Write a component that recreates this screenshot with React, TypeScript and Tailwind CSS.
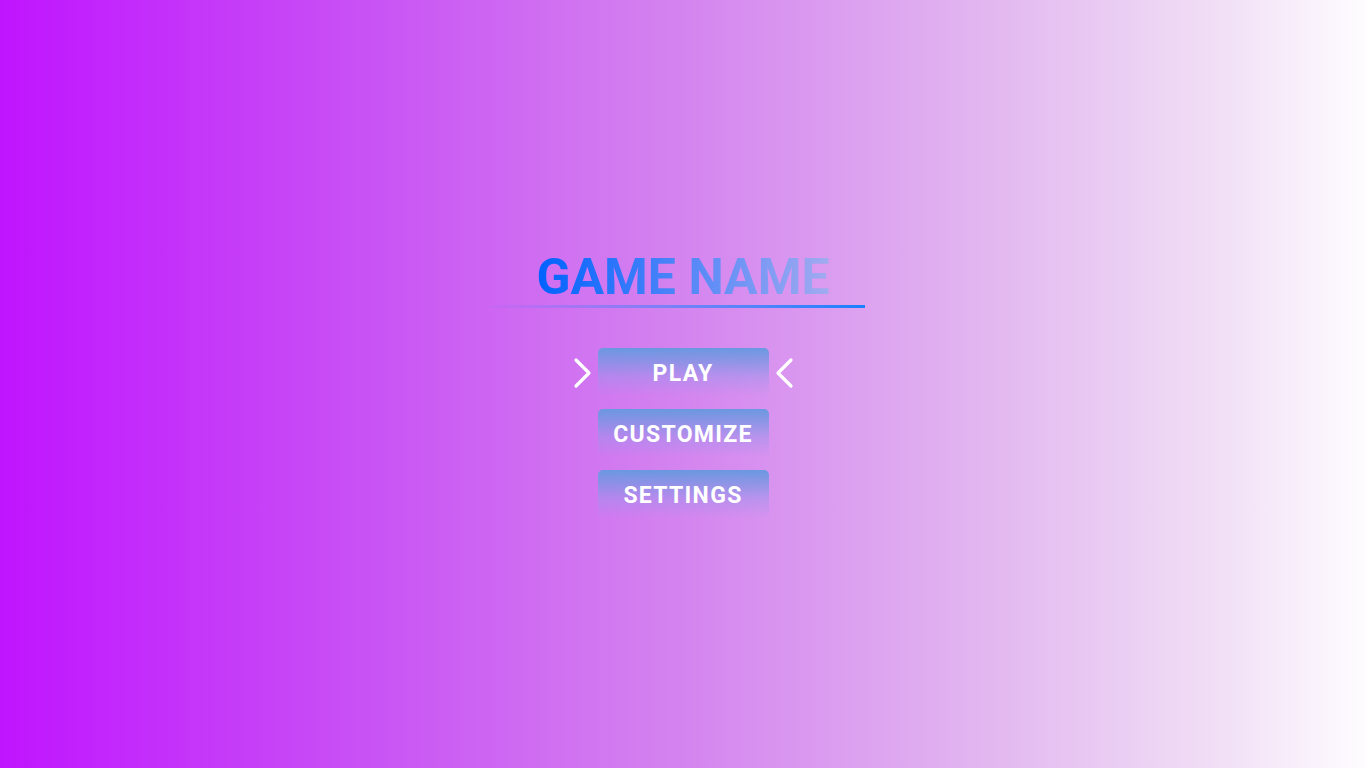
import React from "react";

const Chevron = ({ dir }: { dir: "right" | "left" }) => (
  <svg width="20" height="32" viewBox="0 0 20 32" fill="none">
    {dir === "right" ? (
      <path d="M3 3 L16 16 L3 29" stroke="white" strokeWidth="3.2" strokeLinecap="round" strokeLinejoin="round" />
    ) : (
      <path d="M17 3 L4 16 L17 29" stroke="white" strokeWidth="3.2" strokeLinecap="round" strokeLinejoin="round" />
    )}
  </svg>
);

const MenuButton = ({ label }: { label: string }) => (
  <div className="w-[171px] h-[48px] rounded-t-[5px] bg-[linear-gradient(to_bottom,#6a98e0,rgba(150,150,235,0.45)_60%,rgba(170,140,235,0))] flex items-center justify-center pt-[2px]">
    <span className="text-white font-bold text-[23px] tracking-[1.3px] leading-none">{label}</span>
  </div>
);

export default function App() {
  return (
    <div
      className="w-full h-[768px] flex flex-col items-center bg-[linear-gradient(to_right,#c014ff_0%,#c84ef5_25%,#d484ef_50%,#e2b6f0_72%,#f0dcf5_88%,#fefcff_100%)]"
      style={{ fontFamily: "Roboto, 'Liberation Sans', sans-serif" }}
    >
      <div className="mt-[249px] flex flex-col items-center">
        <h1 className="text-[50px] font-bold leading-[57px] bg-[linear-gradient(to_right,#0062ff,#a2abf0)] bg-clip-text text-transparent">
          GAME NAME
        </h1>
        <div className="mt-[-1px] ml-[-22px] w-[385px] h-[3px] bg-[linear-gradient(to_right,rgba(26,127,255,0),#1a7fff)]" />
      </div>
      <div className="mt-[40px] flex flex-col items-center gap-[13px]">
        <div className="relative">
          <div className="absolute left-[-25px] top-[9px]">
            <Chevron dir="right" />
          </div>
          <MenuButton label="PLAY" />
          <div className="absolute right-[-25px] top-[9px]">
            <Chevron dir="left" />
          </div>
        </div>
        <MenuButton label="CUSTOMIZE" />
        <MenuButton label="SETTINGS" />
      </div>
    </div>
  );
}
